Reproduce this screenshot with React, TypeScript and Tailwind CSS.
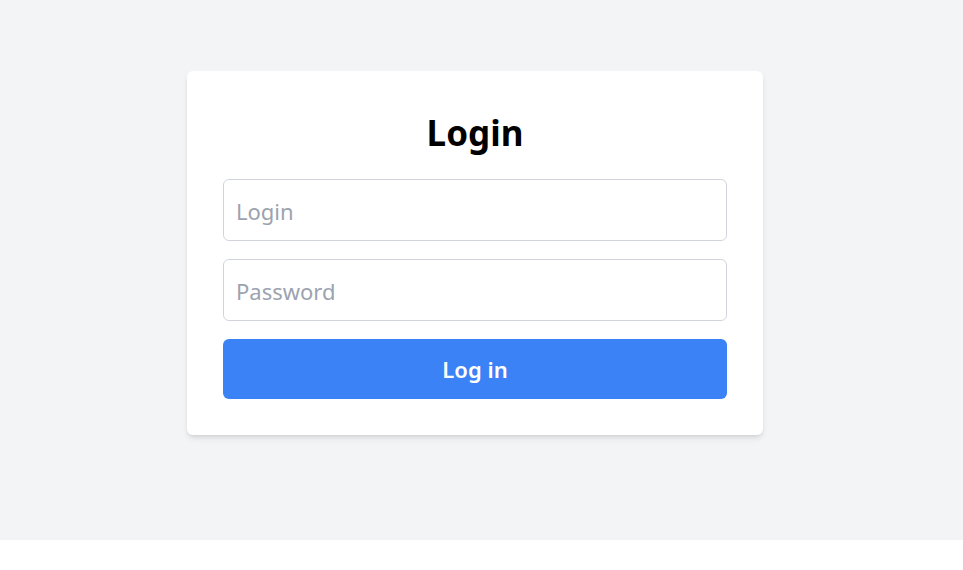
export default function App() {
  return (
    <div className="min-h-[570px] bg-white font-['Noto_Sans',sans-serif]">
      <div className="flex h-[540px] justify-center bg-gray-100 pr-[13px] pt-[71px]">
        <form className="h-fit w-[576px] rounded-md bg-white p-9 shadow-md">
          <h1 className="mb-[23px] mt-[3px] text-center text-[35px] font-bold leading-[46px] text-black">Login</h1>
          <div className="flex flex-col gap-[18px]">
            <input
              type="text"
              placeholder="Login"
              className="w-full rounded-md border border-[#d1d5db] px-3 pb-[13px] pt-[15px] text-[22px] leading-8 outline-none placeholder:text-[#9ca3af]"
            />
            <input
              type="password"
              placeholder="Password"
              className="w-full rounded-md border border-[#d1d5db] px-3 pb-[13px] pt-[15px] text-[22px] leading-8 outline-none placeholder:text-[#9ca3af]"
            />
            <button
              type="button"
              className="w-full rounded-md bg-[#3b82f6] py-[14px] text-[22px] font-semibold leading-8 text-white"
            >
              Log in
            </button>
          </div>
        </form>
      </div>
    </div>
  );
}
